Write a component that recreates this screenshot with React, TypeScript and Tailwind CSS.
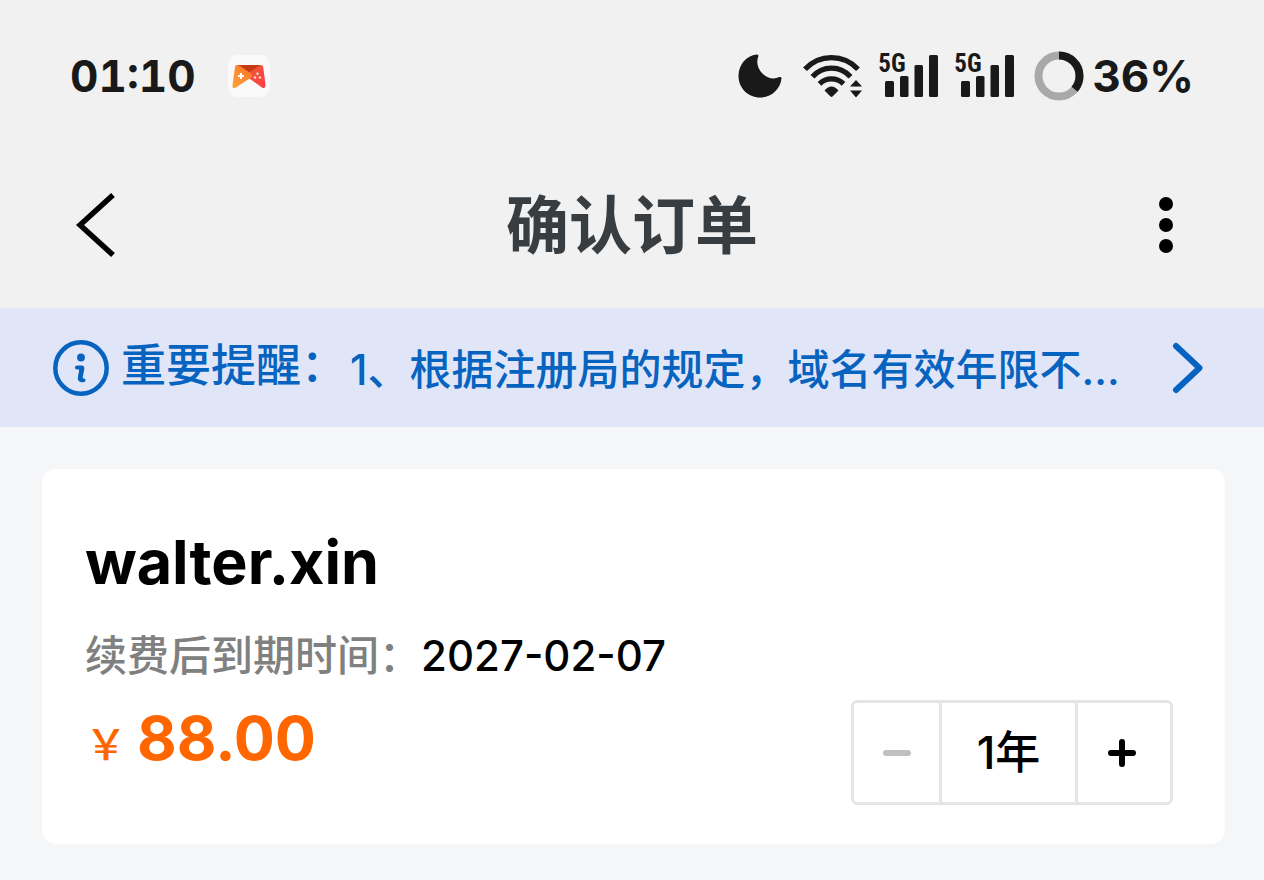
import { useState } from "react";

function Moon() {
  return (
    <svg width="44" height="44" viewBox="0 0 44 44" fill="#191919" aria-hidden="true">
      <path d="M18.600 .5C8.500 1.500 .500 10.500 .500 22C.500 34 10 43.500 22 43.500C33.500 43.500 42.500 35 43.500 24.500C43.600 23.200 42.300 22.500 41.200 23.100C36 25.600 29.500 24.500 24.600 19.700C19.700 14.800 18 8 20.300 2.500C20.800 1.300 19.900 .400 18.600 .500Z" />
    </svg>
  );
}

function Wifi() {
  return (
    <svg width="60" height="44" viewBox="0 0 60 44" fill="none" aria-hidden="true">
      <g stroke="#191919" strokeWidth="5.200">
        <path d="M3 15.200A36 36 0 0 1 56 15.200" />
        <path d="M10.500 22.800A25 25 0 0 1 48.500 22.800" />
        <path d="M17.500 29.800A17 17 0 0 1 41.500 29.800" />
      </g>
      <path d="M22.500 36.500Q29.500 28.500 36.500 36.500L30.500 42.600Q29.500 43.400 28.500 42.600Z" fill="#191919" />
      <path d="M54 26L60 32.500H48ZM48 36.500H60L54 43.500Z" fill="#191919" />
    </svg>
  );
}

function Signal() {
  return (
    <div className="relative h-11 w-15">
      <span className="absolute top-0 left-0 font-['Liberation_Sans_Narrow','Roboto_Condensed',sans-serif] text-[25px] leading-5 font-bold">
        5G
      </span>
      <svg width="60" height="44" viewBox="0 0 60 44" fill="#191919" aria-hidden="true">
        <rect x="7" y="27" width="9" height="16" rx="1.500" />
        <rect x="22" y="22" width="8.500" height="21" rx="1.500" />
        <rect x="36.500" y="11" width="8.500" height="32" rx="1.500" />
        <rect x="51" y="1" width="9" height="42" rx="1.500" />
      </svg>
    </div>
  );
}

function BatteryRing({ percent }: { percent: number }) {
  const length = 2 * Math.PI * 20.5;
  return (
    <svg width="50" height="50" viewBox="0 0 50 50" fill="none" aria-hidden="true">
      <circle cx="25" cy="25" r="20.500" stroke="#a9a9a9" strokeWidth="8" />
      <circle
        cx="25"
        cy="25"
        r="20.500"
        stroke="#191919"
        strokeWidth="8"
        strokeDasharray={`${(length * percent) / 100} ${length}`}
        transform="rotate(-90 25 25)"
      />
    </svg>
  );
}

function GameIcon() {
  return (
    <svg width="42" height="42" viewBox="0 0 42 42" aria-hidden="true">
      <defs>
        <linearGradient id="pad-left" x1="0" y1="1" x2="1" y2="0">
          <stop offset="0" stopColor="#ffa43a" />
          <stop offset="1" stopColor="#f9702a" />
        </linearGradient>
        <linearGradient id="pad-right" x1="0" y1="0" x2="1" y2="1">
          <stop offset="0" stopColor="#ee5a30" />
          <stop offset="1" stopColor="#ff3d48" />
        </linearGradient>
      </defs>
      <rect width="42" height="42" rx="10" fill="#fafafa" />
      <path d="M9 10H33L21 19Z" fill="#c63a10" />
      <path d="M33 10Q34.800 10 35.200 12L37.500 30Q37.800 34.500 34 32.500L20 22.500V18Z" fill="url(#pad-right)" />
      <path d="M9 10Q7.300 10 7 12L4.500 30Q4.300 34.500 8 32.500L23 22.500Q25 20.500 23 18.500L12 11Z" fill="url(#pad-left)" />
      <path d="M13 18V24M10 21H16" stroke="#fff" strokeWidth="2" />
      <g fill="#ffd9d0">
        <circle cx="29.500" cy="18.800" r="1.300" />
        <circle cx="27" cy="22.500" r="1.300" />
        <circle cx="32" cy="22.500" r="1.300" />
      </g>
    </svg>
  );
}

function InfoIcon() {
  return (
    <svg className="shrink-0" width="56" height="56" viewBox="0 0 56 56" fill="none" aria-hidden="true">
      <circle cx="28" cy="28" r="25.700" stroke="#0763c0" strokeWidth="4.500" />
      <circle cx="28" cy="17.500" r="3.900" fill="#0763c0" />
      <path
        d="M24 27.500H29L26.800 38Q26.600 40.200 28.500 40.200H30.500"
        stroke="#0763c0"
        strokeWidth="4"
        strokeLinecap="round"
        strokeLinejoin="round"
      />
      <path d="M26.500 27.500H31.500L29.300 40H25Z" fill="#0763c0" />
    </svg>
  );
}

export default function App() {
  const [years, setYears] = useState(1);

  return (
    <div className="min-h-screen bg-[#f5f6f8] font-['Inter','Noto_Sans_CJK_SC',sans-serif] text-black" lang="zh-CN">
      <header className="bg-[#f1f1f1]">
        {/* Status bar */}
        <div className="flex h-38 items-center justify-between px-[70px] text-[#191919]">
          <div className="flex items-center gap-8">
            <span className="text-[44px] leading-11 font-bold tabular-nums">01:10</span>
            <GameIcon />
          </div>
          <div className="flex items-center">
            <Moon />
            <div className="ml-5 flex items-center gap-4">
              <Wifi />
              <Signal />
              <Signal />
            </div>
            <div className="ml-5 flex items-center gap-2">
              <BatteryRing percent={36} />
              <span className="text-[44px] leading-11 font-bold">36%</span>
            </div>
          </div>
        </div>

        {/* Title bar */}
        <div className="flex h-39 items-center justify-between px-16 pb-2.5">
          <button type="button" aria-label="返回" className="flex h-20 w-16 items-center justify-center">
            <svg width="40" height="66" viewBox="0 0 40 66" fill="none" stroke="#000" strokeWidth="5.500">
              <path d="M37 3L4 33L37 63" />
            </svg>
          </button>
          <h1 className="text-[63px] leading-20 font-bold text-[#373d41]">确认订单</h1>
          <button type="button" aria-label="更多" className="flex h-20 w-16 items-center justify-center">
            <svg width="18" height="56" viewBox="0 0 18 56">
              <circle cx="7" cy="7" r="7" />
              <circle cx="7" cy="28" r="7" />
              <circle cx="7" cy="49" r="7" />
            </svg>
          </button>
        </div>
      </header>

      <a href="#notice" className="flex h-[119px] items-center bg-[#e0e6f8] pr-15 pl-[53px] text-[#0763c0]">
        <InfoIcon />
        <span className="mr-1 ml-3 shrink-0 pb-1 text-[45px] leading-15 font-medium">重要提醒：</span>
        <span className="min-w-0 flex-1 truncate pt-1 text-[42px] leading-15 font-medium">
          1、根据注册局的规定，域名有效年限不…
        </span>
        <svg className="shrink-0" width="32" height="52" viewBox="0 0 32 52" fill="none" aria-hidden="true">
          <path d="M4 4L27.500 26L4 48" stroke="#0763c0" strokeWidth="6" strokeLinecap="round" strokeLinejoin="round" />
        </svg>
      </a>

      <main className="py-[42px] pr-[39px] pl-[42px]">
        <section className="rounded-[14px] bg-white pt-[59px] pr-[52px] pb-[39px] pl-[43px]">
          <h2 className="text-[61px] leading-17 font-bold">walter.xin</h2>
          <p className="mt-[30px] text-[42px] leading-15 font-medium">
            <span className="text-[#808080]">续费后到期时间：</span>
            <span>2027-02-07</span>
          </p>
          <div className="mt-3.5 flex items-start justify-between">
            <p className="flex items-baseline pt-2 text-[#ff6600]">
              <span className="mr-2.5 text-[42px] font-medium">￥</span>
              <span className="text-[61px] leading-15 font-bold">88.00</span>
            </p>
            <div className="flex h-[105px] divide-x-3 divide-[#e5e5e5] rounded-md border-3 border-[#e5e5e5]">
              <button
                type="button"
                aria-label="减少"
                disabled={years <= 1}
                onClick={() => setYears(years - 1)}
                className="flex w-[88px] items-center justify-center disabled:text-[#c0c0c0]"
              >
                <svg width="28" height="28" viewBox="0 0 28 28" stroke="currentColor" strokeWidth="6" strokeLinecap="round">
                  <path d="M3 14H25" />
                </svg>
              </button>
              <output className="flex w-[136px] items-center justify-center text-[45px] font-medium">
                {years}年
              </output>
              <button
                type="button"
                aria-label="增加"
                onClick={() => setYears(years + 1)}
                className="flex w-[92px] items-center justify-center pr-1"
              >
                <svg width="28" height="28" viewBox="0 0 28 28" stroke="currentColor" strokeWidth="6" strokeLinecap="round">
                  <path d="M3 14H25M14 3V25" />
                </svg>
              </button>
            </div>
          </div>
        </section>
      </main>
    </div>
  );
}
